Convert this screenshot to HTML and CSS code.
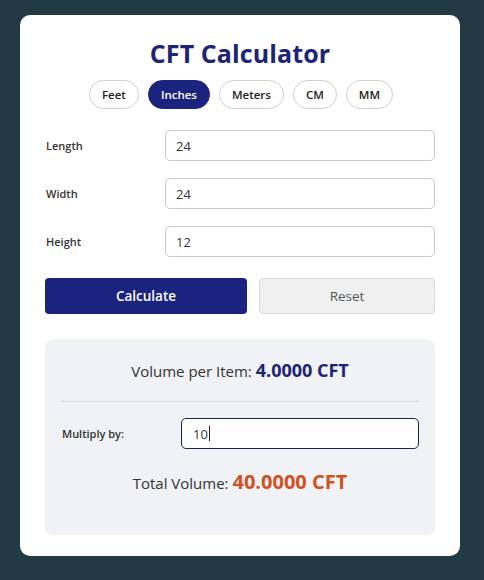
FILE: index.html
```html
<!DOCTYPE html>
<html>
<head>
<meta charset="utf-8">
<link rel="stylesheet" href="styles.css">
</head>
<body>
<div class="card">
  <h1 class="title">CFT Calculator</h1>
  <div class="units">
    <button class="unit">Feet</button>
    <button class="unit active">Inches</button>
    <button class="unit">Meters</button>
    <button class="unit">CM</button>
    <button class="unit">MM</button>
  </div>
  <div class="fields">
    <label class="row"><span class="lbl">Length</span><input class="inp" value="24"></label>
    <label class="row"><span class="lbl">Width</span><input class="inp" value="24"></label>
    <label class="row"><span class="lbl">Height</span><input class="inp" value="12"></label>
  </div>
  <div class="actions">
    <button class="btn primary">Calculate</button>
    <button class="btn secondary">Reset</button>
  </div>
  <div class="result">
    <div class="line">Volume per Item: <strong class="v1">4.0000 CFT</strong></div>
    <hr class="divider">
    <label class="row mult"><span class="lbl">Multiply by:</span><span class="inp focus">10<span class="caret"></span></span></label>
    <div class="line total">Total Volume: <strong class="v2">40.0000 CFT</strong></div>
  </div>
</div>
</body>
</html>
```

FILE: styles.css
```css
* { box-sizing: border-box; }
html, body { margin: 0; padding: 0; }
body {
  background: #213a44;
  font-family: "Open Sans", sans-serif;
  width: 484px;
  height: 580px;
  padding: 15px 24px 0 20px;
}
.card {
  background: #fff;
  border-radius: 10px;
  width: 440px;
  height: 541px;
  padding: 22px 25px 20px 25px;
}
.title {
  margin: 0;
  text-align: center;
  font-size: 25px;
  font-weight: 700;
  color: #1c2378;
  line-height: 32px;
  letter-spacing: 0.1px;
}
.units {
  display: flex;
  justify-content: center;
  gap: 9px;
  margin-top: 11px;
  padding-left: 2px;
}
.unit {
  font-family: inherit;
  height: 29px;
  border-radius: 15px;
  border: 1px solid #cfcfcf;
  background: #fff;
  color: #222;
  font-size: 11.5px;
  font-weight: 600;
  padding: 0 12px;
}
.unit.active {
  background: #1a237e;
  border-color: #1a237e;
  color: #fff;
}
.fields {
  margin-top: 21px;
  display: flex;
  flex-direction: column;
  gap: 17px;
}
.row {
  display: grid;
  grid-template-columns: 120px 1fr;
  align-items: center;
}
.lbl {
  font-size: 11px;
  font-weight: 600;
  color: #333;
  padding-left: 1px;
}
.inp {
  font-family: inherit;
  height: 31px;
  border: 1px solid #c9c9c9;
  border-radius: 5px;
  padding: 0 10px;
  font-size: 13px;
  color: #333;
  width: 100%;
  outline: none;
  background: #fff;
}
.actions {
  display: grid;
  grid-template-columns: 202px 1fr;
  gap: 12px;
  margin-top: 21px;
}
.btn {
  font-family: inherit;
  height: 36px;
  border-radius: 4px;
  font-size: 13.5px;
  font-weight: 600;
}
.primary {
  background: #1a237e;
  color: #fff;
  border: none;
}
.secondary {
  background: #f0f0f0;
  color: #555;
  border: 1px solid #dcdcdc;
  font-weight: 500;
}
.result {
  margin-top: 25px;
  background: #f0f2f5;
  border-radius: 8px;
  height: 196px;
  padding: 20px 16px 0 16px;
}
.line {
  text-align: center;
  font-size: 15px;
  color: #333;
  line-height: 22px;
}
.v1 { color: #1c2378; font-size: 18px; font-weight: 700; }
.divider {
  border: none;
  border-top: 1px solid #d3d8e2;
  margin: 19px 0 16px 0;
}
.mult .lbl { font-size: 11px; }
.mult .focus {
  display: flex;
  align-items: center;
  border-color: #1c2348;
  padding-left: 11px;
}
.caret {
  display: inline-block;
  width: 1px;
  height: 15px;
  background: #222;
  margin-left: 1px;
}
.total { margin-top: 22px; }
.v2 { color: #d2501f; font-size: 20px; font-weight: 700; }
```
